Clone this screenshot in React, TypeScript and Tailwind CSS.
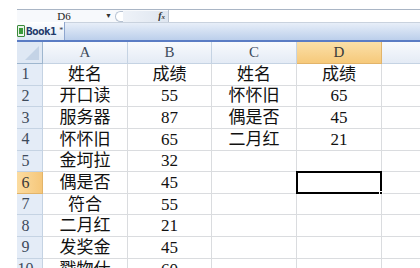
import React from "react";

const cols = [
  { key: "A", w: "w-[85px]" },
  { key: "B", w: "w-[84px]" },
  { key: "C", w: "w-[85px]" },
  { key: "D", w: "w-[85px]" },
];

const rows: string[][] = [
  ["姓名", "成绩", "姓名", "成绩"],
  ["开口读", "55", "怀怀旧", "65"],
  ["服务器", "87", "偶是否", "45"],
  ["怀怀旧", "65", "二月红", "21"],
  ["金坷拉", "32", "", ""],
  ["偶是否", "45", "", ""],
  ["符合", "55", "", ""],
  ["二月红", "21", "", ""],
  ["发奖金", "45", "", ""],
  ["戳物仕", "60", "", ""],
];

const cellFont = { fontFamily: '"Liberation Serif", "Noto Sans CJK SC", serif' };

export default function App() {
  return (
    <div className="w-[420px] h-[268px] overflow-hidden bg-white pl-[17px] pt-[9px]" style={cellFont}>
      {/* Formula bar */}
      <div className="flex h-[14px] items-center border-t border-b border-t-[#a9b5c5] border-b-[#c9d2de] bg-[#f7f9fc]">
        <div className="w-[88px] text-center text-[11px] leading-none text-[#222] pl-[6px]">D6</div>
        <div className="w-[10px] text-[7px] leading-none text-[#333]">▼</div>
        <div className="h-[11px] w-[8px] rounded-l-full border border-r-0 border-[#b7c3d3] bg-white" />
        <div className="flex h-[11px] w-[45px] items-center justify-end pr-[3px] bg-gradient-to-r from-[#eef2f8] to-[#dfe6f0]">
          <span className="text-[10px] italic font-bold leading-none text-[#333]">f<span className="text-[7px]">x</span></span>
        </div>
        <div className="h-full flex-1 border-l border-[#b9c3d0] bg-white" />
      </div>

      {/* Tab bar */}
      <div className="flex h-[19px] items-end bg-gradient-to-b from-[#e7eef8] to-[#bccfeb] border-b-2 border-[#5a7cc4]">
        <div className="flex h-[18px] w-[48px] shrink-0 items-center gap-[1px] border-r border-[#8ea6cf] bg-gradient-to-b from-white to-[#dde7f4]">
          <div className="flex h-[12px] w-[8px] shrink-0 items-center justify-center rounded-[1px] border border-[#3c8a3c] bg-[#eaf5ea]">
            <div className="h-[6px] w-[4px] bg-[#3a9a3a]" />
          </div>
          <span className="text-[11px] font-bold leading-none text-[#1f3a6b] tracking-[-0.6px]" style={{ fontFamily: '"DejaVu Sans Mono", monospace' }}>
            Book1
          </span>
          <span className="ml-[2px] text-[8px] leading-none text-[#334]">*</span>
        </div>
      </div>

      {/* Grid */}
      <div className="flex flex-col">
        {/* Header row */}
        <div className="flex h-[22px]">
          <div className="relative w-[26px] border-r border-b border-[#9eb6ce] bg-[#dfe8f4] overflow-hidden">
            <div
              className="absolute right-[3px] bottom-[3px] h-[14px] w-[14px] bg-[#c4d3e6]"
              style={{ clipPath: "polygon(100% 0, 100% 100%, 0 100%)" }}
            />
          </div>
          {cols.map((c) => (
            <div
              key={c.key}
              className={`${c.w} flex items-center justify-center border-r border-b text-[15px] leading-none ${
                c.key === "D"
                  ? "border-[#e2b46a] bg-gradient-to-b from-[#fbe0a8] to-[#f6c97a] text-[#3a3a3a]"
                  : "border-[#c5d3e3] bg-gradient-to-b from-[#f8fafd] to-[#e4ebf5] text-[#3e4b5c]"
              }`}
            >
              {c.key}
            </div>
          ))}
          <div className="flex-1 border-b border-[#c5d3e3] bg-gradient-to-b from-[#f8fafd] to-[#e4ebf5]" />
        </div>

        {rows.map((r, i) => {
          const n = i + 1;
          const sel = n === 6;
          return (
            <div key={n} className="flex h-[21.65px] shrink-0">
              <div
                className={`flex w-[26px] items-center justify-center pr-[8px] border-r border-b text-[16px] leading-none ${
                  sel
                    ? "border-[#e2b46a] bg-gradient-to-r from-[#fbdca0] to-[#f6c77a] text-[#3a3a3a]"
                    : "border-[#c5d3e3] bg-[#e4ecf7] text-[#3e4b5c]"
                }`}
              >
                {n}
              </div>
              {cols.map((c, j) => (
                <div
                  key={c.key}
                  className={`${c.w} relative flex items-center justify-center border-r border-b border-[#dadcdf] text-[17px] leading-none text-[#111]`}
                >
                  {r[j]}
                  {sel && c.key === "D" && (
                    <div className="absolute left-[-1px] top-[-1px] right-[-1px] bottom-[-1px] border-2 border-black">
                      <div className="absolute right-[-3px] bottom-[-3px] h-[4px] w-[4px] bg-black border border-white" />
                    </div>
                  )}
                </div>
              ))}
              <div className="flex-1 border-b border-[#dadcdf]" />
            </div>
          );
        })}
      </div>
    </div>
  );
}
